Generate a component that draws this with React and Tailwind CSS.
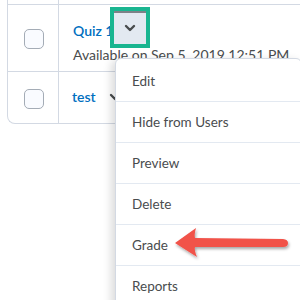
import React from 'react';

const MENU_ITEMS = ["Edit", "Hide from Users", "Preview", "Delete", "Grade", "Reports"];

function Chevron({ className = "" }) {
  return (
    <svg width="12" height="8" viewBox="0 0 12 8" className={className}>
      <path d="M2 2 L6 6 L10 2" fill="none" stroke="#494c4e" strokeWidth="2.4" strokeLinecap="round" strokeLinejoin="round" />
    </svg>
  );
}

function Checkbox() {
  return <div className="w-5 h-5 rounded-[5px] border border-[#a4acb6] bg-[#f9fbff]" />;
}

export default function App() {
  return (
    <div className="relative w-[300px] h-[300px] overflow-hidden bg-white font-['Lato','Noto_Sans',sans-serif]">
      {/* TABLE */}
      <div className="ml-[7px] w-[320px] border-l border-[#d3d9e3] rounded-bl-lg border-b">
        <div className="flex h-[4px]">
          <div className="w-[51px] border-r border-[#d3d9e3]" />
        </div>
        <div className="flex h-[67px] border-t border-[#d3d9e3]">
          <div className="w-[51px] border-r border-[#d3d9e3] flex items-center justify-center pl-[1px] pt-[2px]">
            <Checkbox />
          </div>
          <div className="pl-[14px] pt-[16px]">
            <div className="flex items-center gap-2">
              <span className="text-[14px] font-semibold text-[#006fbf] leading-[20px]">Quiz 1</span>
            </div>
            <p className="text-[14px] text-[#494c4e] leading-[20px] mt-[4px] whitespace-nowrap">
              Available on Sep 5, 2019 12:51 PM
            </p>
          </div>
        </div>
        <div className="flex h-[52px] border-t border-[#d3d9e3]">
          <div className="w-[51px] border-r border-[#d3d9e3] flex items-center justify-center pl-[1px] pt-[3px]">
            <Checkbox />
          </div>
          <div className="pl-[13px] flex items-center gap-[13px] pb-[2px]">
            <span className="text-[14px] font-semibold text-[#006fbf]">test</span>
            <Chevron />
          </div>
        </div>
      </div>

      {/* HIGHLIGHTED BUTTON */}
      <div className="absolute left-[110px] top-[7px] w-[40px] h-[41px] border-[4px] border-[#19b590] bg-[#e3e9f1] shadow-[inset_0_2px_0_#7d8288] flex items-center justify-center">
        <Chevron className="mt-[1px]" />
      </div>

      {/* DROPDOWN MENU */}
      <div className="absolute left-[115px] top-[58px] w-[187px] h-[260px] bg-white border border-[#d3d9e3] rounded-md shadow-[-4px_2px_8px_rgba(0,0,0,0.14)] pt-[2px]">
        {MENU_ITEMS.map((item) => (
          <div key={item} className="h-[41px] flex items-center pl-[16px] border-b border-[#e3e9f1] text-[13.5px] text-[#494c4e]">
            {item}
          </div>
        ))}
      </div>

      {/* ARROW ANNOTATION */}
      <svg className="absolute left-[170px] top-[222px]" width="128" height="40" viewBox="0 0 128 40">
        <defs>
          <filter id="ds" x="-10%" y="-30%" width="130%" height="170%">
            <feDropShadow dx="1" dy="2" stdDeviation="1.5" floodColor="#000" floodOpacity="0.35" />
          </filter>
        </defs>
        <g filter="url(#ds)">
          <path d="M5 21 L26 6 Q24 13 25 16 L113 17 Q118 17.5 118 21 Q118 25 113 25 L25 25 Q24 28 27 35 Z" fill="#f1524a" />
        </g>
      </svg>
    </div>
  );
}
